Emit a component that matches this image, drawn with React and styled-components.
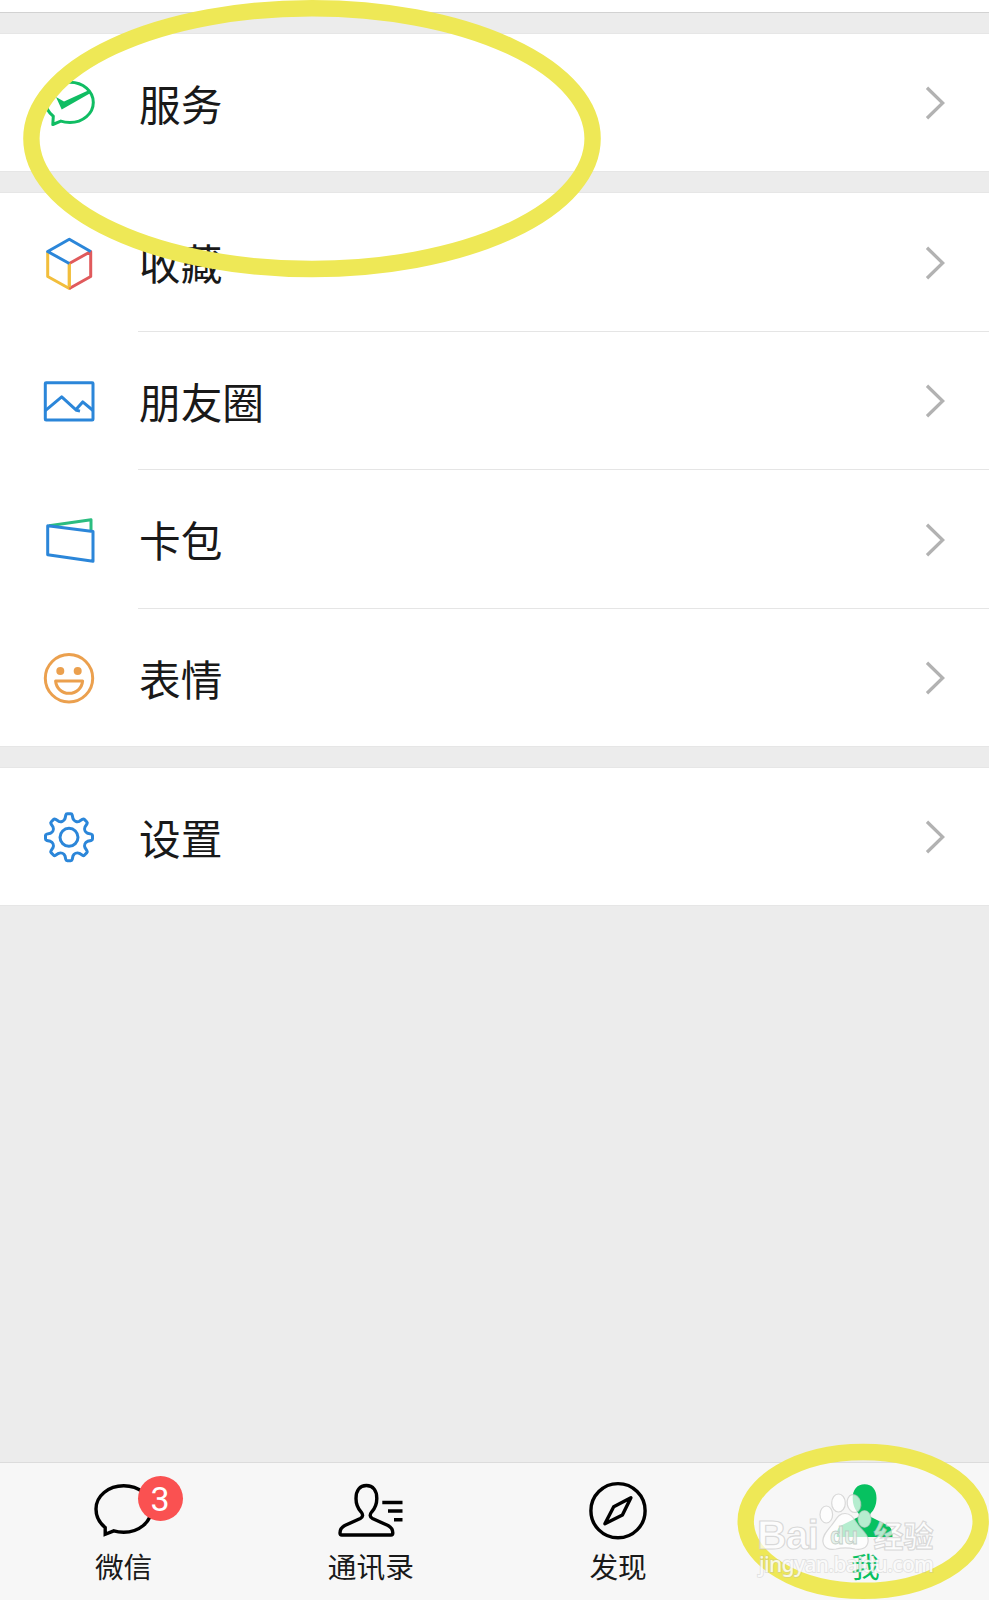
import React from 'react';
import styled, { createGlobalStyle } from 'styled-components';

const GlobalStyle = createGlobalStyle`
  * {
    box-sizing: border-box;
  }
  body {
    margin: 0;
    background-color: #ececec;
    font-family: 'Noto Sans CJK SC', 'Noto Sans', sans-serif;
  }
`;

const Screen = styled.div`
  position: relative;
  display: flex;
  flex-direction: column;
  width: 989px;
  height: 1600px;
  overflow: hidden;
  background-color: #ececec;
`;

const TopCard = styled.div`
  height: 13px;
  background-color: #ffffff;
  border-bottom: 1px solid #d2d2d2;
`;

const Groups = styled.main`
  display: flex;
  flex-direction: column;
  flex: 1;
  gap: 22px;
  padding-top: 21px;
`;

const Group = styled.section`
  background-color: #ffffff;
  box-shadow: 0 0 0 1px #e6e6e6;
`;

const Row = styled.div`
  display: flex;
  align-items: center;
  height: ${(props) => props.$height}px;
  padding-left: 41px;
`;

const RowBody = styled.div`
  display: flex;
  align-items: center;
  justify-content: space-between;
  flex: 1;
  height: 100%;
  margin-left: 41px;
  padding-right: 44px;
  border-bottom: ${(props) => (props.$divider ? '1px solid #e5e5e5' : 'none')};
`;

const RowLabel = styled.span`
  font-size: 41.7px;
  line-height: 60px;
  color: #191919;
  padding-left: 1px;
`;

const RowIcon = styled.svg`
  width: 56px;
  height: 56px;
  fill: none;
  stroke-width: 3;
  stroke-linejoin: round;
`;

const Chevron = styled.svg`
  width: 20px;
  height: 34px;
  margin-top: 1px;
  fill: none;
  stroke: #b2b2b2;
  stroke-width: 3.3;
`;

const TabBar = styled.nav`
  display: grid;
  grid-template-columns: repeat(4, 1fr);
  height: 138px;
  background-color: #f7f7f7;
  border-top: 1px solid #dcdcdc;
`;

const Tab = styled.div`
  display: flex;
  flex-direction: column;
  align-items: center;
  padding-top: 17px;
  color: ${(props) => (props.$active ? '#07c160' : '#191919')};
`;

const TabIconBox = styled.div`
  position: relative;
  width: 72px;
  height: 60px;
`;

const TabIcon = styled.svg`
  display: block;
  width: 72px;
  height: 60px;
  fill: none;
  stroke: #000000;
  stroke-width: 3.4;
`;

const TabLabel = styled.span`
  margin-top: 5px;
  font-size: 28.7px;
  line-height: 42px;
`;

const Badge = styled.span`
  position: absolute;
  top: -4px;
  left: 50px;
  width: 45px;
  height: 45px;
  border-radius: 50%;
  background-color: #fa5151;
  color: #ffffff;
  font-family: Roboto, sans-serif;
  font-size: 34px;
  line-height: 46px;
  text-align: center;
`;

const Overlay = styled.svg`
  position: absolute;
  top: 0;
  left: 0;
  width: 989px;
  height: 1600px;
  pointer-events: none;
`;

const BLUE = '#2b86d9';
const GREEN = '#10bd63';
const YELLOW = '#f2be3c';
const RED = '#e05a5c';
const ORANGE = '#eba04e';

// eight teeth around a 28,28 centre
const gearPath = () => {
  const at = (angle, r, side) => {
    const x = 28 + r * Math.cos(angle) - side * Math.sin(angle);
    const y = 28.3 + r * Math.sin(angle) + side * Math.cos(angle);
    return `${x.toFixed(2)} ${y.toFixed(2)}`;
  };
  let d = '';
  for (let i = 0; i < 8; i++) {
    const a = (i * Math.PI) / 4;
    const next = a + Math.PI / 4;
    d += `${i === 0 ? 'M' : 'L'}${at(a, 18.6, -4)}`;
    d += `L${at(a, 22.2, -3.2)}Q${at(a, 23.5, -2.9)} ${at(a, 23.5, -1.8)}`;
    d += `L${at(a, 23.5, 1.8)}Q${at(a, 23.5, 2.9)} ${at(a, 22.2, 3.2)}`;
    d += `L${at(a, 18.6, 4)}`;
    d += `C${at(a, 16.2, 5)} ${at(next, 16.2, -5)} ${at(next, 18.6, -4)}`;
  }
  return `${d}Z`;
};

const ServiceIcon = () => (
  <RowIcon viewBox="0 0 56 56" stroke={GREEN}>
    <path d="M12.3 41.2L11.8 49.5L19.8 46.1C22.5 47.1 25.6 47.5 29 47.5C42 47.5 52.3 38.5 52.3 27.5C52.3 16.3 42 7.3 29 7.3C16 7.3 5 16.3 5 27.5C5 33 7.8 37.8 12.3 41.2Z" />
    <path d="M15 22L20.7 34.5L49.6 18L47.7 15.2L23 26.5Z" fill={GREEN} stroke="none" />
  </RowIcon>
);

const FavoritesIcon = () => (
  <RowIcon viewBox="0 0 56 56">
    <path d="M6.7 16.5V41.5L28.3 53.5V28.5" stroke={YELLOW} />
    <path d="M28.3 53.5L49.7 41.5V16.5L28.3 28.5" stroke={RED} />
    <path d="M28.3 28.5V52.5" stroke={YELLOW} />
    <path d="M28.3 28.5L6.7 16.5L28.3 4.3L49.7 16.5" stroke={BLUE} />
  </RowIcon>
);

const MomentsIcon = () => (
  <RowIcon viewBox="0 0 56 56" stroke={BLUE}>
    <rect x="4.3" y="9.7" width="47.7" height="37.4" rx="0.8" />
    <path d="M4.3 37.7L20.7 23.9L35.5 37.3L39 38.1M35 36.5L41.7 28.9L52 37.5" />
  </RowIcon>
);

const CardsIcon = () => (
  <RowIcon viewBox="0 0 56 56">
    <path d="M8 13.7L50 7.7V18.5" stroke="#2bbd80" />
    <path d="M6.7 13.8L52 19.5V49.2L6.7 42.8Z" stroke={BLUE} />
  </RowIcon>
);

const StickersIcon = () => (
  <RowIcon viewBox="0 0 56 56" stroke={ORANGE}>
    <circle cx="28" cy="28.2" r="23.7" />
    <circle cx="19.3" cy="21" r="4" fill={ORANGE} stroke="none" />
    <circle cx="36.7" cy="21" r="4" fill={ORANGE} stroke="none" />
    <path d="M14.6 31H41.6C41 38 35.4 43.300 28 43.300C20.800 43.300 15.200 38 14.600 31Z" />
  </RowIcon>
);

const SettingsIcon = () => (
  <RowIcon viewBox="0 0 56 56" stroke={BLUE}>
    <path d={gearPath()} />
    <circle cx="28" cy="28.3" r="9" />
  </RowIcon>
);

const groups = [
  [{ label: '服务', Icon: ServiceIcon, height: 137 }],
  [
    { label: '收藏', Icon: FavoritesIcon, height: 139 },
    { label: '朋友圈', Icon: MomentsIcon, height: 138 },
    { label: '卡包', Icon: CardsIcon, height: 139 },
    { label: '表情', Icon: StickersIcon, height: 137 },
  ],
  [{ label: '设置', Icon: SettingsIcon, height: 137 }],
];

const MenuRow = ({ item, divider }) => (
  <Row $height={item.height}>
    <item.Icon />
    <RowBody $divider={divider}>
      <RowLabel>{item.label}</RowLabel>
      <Chevron viewBox="0 0 20 34">
        <path d="M2 1.8L17.700 17L2 32.200" />
      </Chevron>
    </RowBody>
  </Row>
);

const Marks = () => (
  <Overlay viewBox="0 0 989 1600" fill="none" stroke="#eee856" strokeWidth="16.4">
    <ellipse cx="312" cy="138.6" rx="280.6" ry="130.4" />
    <ellipse cx="863.2" cy="1521.4" rx="117.5" ry="69.4" />
  </Overlay>
);

const Watermark = () => (
  <Overlay viewBox="0 0 989 1600">
    <g fill="#ffffff" fillOpacity="0.7" stroke="#bdbdbd" strokeOpacity="0.55" strokeWidth="1.200">
      <text x="757" y="1548.5" fontFamily="Liberation Sans, sans-serif" fontWeight="700" fontSize="41" textLength="62">Bai</text>
      <ellipse cx="826.300" cy="1514.500" rx="6.300" ry="8.500" />
      <ellipse cx="838.500" cy="1503" rx="6.800" ry="9" />
      <ellipse cx="854" cy="1503.500" rx="6.800" ry="9" transform="rotate(-12 854 1503.5)" />
      <ellipse cx="864.500" cy="1519" rx="6.500" ry="8.500" />
      <path d="M845 1513.500C852 1513.500 854 1519.500 859 1526C864 1532 869 1535.500 868 1542C867 1548.500 861 1550 855 1549C848 1547.500 842 1547.500 836 1549C829 1550.500 824 1548 823 1542C822 1536 827 1531 831 1526C836 1520 838 1513.500 845 1513.500Z" />
      <text x="873.500" y="1546.500" fontFamily="Noto Sans CJK SC, sans-serif" fontWeight="700" fontSize="30">经验</text>
    </g>
    <text
      x="830"
      y="1543.500"
      fontFamily="Liberation Sans, sans-serif"
      fontWeight="700"
      fontSize="23"
      fill="#e4f1e9"
      fillOpacity="0.9"
      stroke="#b9c4bd"
      strokeOpacity="0.8"
      strokeWidth="0.800"
      textLength="28"
    >
      du
    </text>
    <text
      x="759"
      y="1571.500"
      fontFamily="Noto Sans, sans-serif"
      fontWeight="500"
      fontSize="21"
      fill="#ffffff"
      fillOpacity="0.82"
      stroke="#b5b5b5"
      strokeOpacity="0.32"
      strokeWidth="1.800"
      paintOrder="stroke"
      textLength="175"
    >
      jingyan.baidu.com
    </text>
  </Overlay>
);

const App = () => {
  return (
    <>
      <GlobalStyle />
      <Screen>
        <TopCard />
        <Groups>
          {groups.map((items) => (
            <Group key={items[0].label}>
              {items.map((item, i) => (
                <MenuRow key={item.label} item={item} divider={i < items.length - 1} />
              ))}
            </Group>
          ))}
        </Groups>
        <TabBar>
          <Tab>
            <TabIconBox>
              <TabIcon viewBox="0 0 72 60">
                <path d="M17.2 47.5V54.3L25.8 50.9C29 51.9 32 52.3 35.7 52.3C51 52.3 63.4 42 63.4 29C63.4 16 51 5.8 35.7 5.8C20.4 5.8 8 16 8 29C8 36.5 11.5 43 17.2 47.5Z" />
              </TabIcon>
              <Badge>3</Badge>
            </TabIconBox>
            <TabLabel>微信</TabLabel>
          </Tab>
          <Tab>
            <TabIconBox>
              <TabIcon viewBox="0 0 72 60">
                <path d="M31.4 5.5C38 5.5 41.8 10.5 41.8 18.5C41.8 24 39.8 28.5 36.8 31.8C34.6 34.5 34.6 37 37.5 38.5L52.5 45.3C56.5 47.2 57.8 49.3 57.8 53Q57.8 55 56 55H6.8Q5 55 5 53C5 49.3 6.3 47.2 10.3 45.3L25.3 38.5C28.2 37 28.2 34.5 26 31.8C23 28.5 21 24 21 18.5C21 10.5 24.8 5.5 31.4 5.5Z" />
                <path d="M47.3 22.5H67.5M53 31H67.5M59 39.7H67.5" />
              </TabIcon>
            </TabIconBox>
            <TabLabel>通讯录</TabLabel>
          </Tab>
          <Tab>
            <TabIconBox>
              <TabIcon viewBox="0 0 72 60" strokeLinejoin="round">
                <circle cx="36" cy="30.7" r="27.1" />
                <path d="M48.9 17.7L40.4 34.9L22.9 43.7L31.7 26.7Z" />
              </TabIcon>
            </TabIconBox>
            <TabLabel>发现</TabLabel>
          </Tab>
          <Tab $active>
            <TabIconBox>
              <TabIcon viewBox="0 0 72 60">
                <path
                  d="M35.6 4.3C43 4.3 47.5 9.5 47.5 18C47.5 25 45 30 42 33C40.5 35 41 36.5 43 37.5L57 44.5C61.5 46.7 63.5 49 63.5 57H7.7C7.7 49 9.7 46.7 14.2 44.5L28.2 37.5C30.2 36.5 30.7 35 29.2 33C26.2 30 23.7 25 23.7 18C23.7 9.5 28.2 4.3 35.6 4.3Z"
                  fill="#07c160"
                  stroke="none"
                />
              </TabIcon>
            </TabIconBox>
            <TabLabel>我</TabLabel>
          </Tab>
        </TabBar>
        <Marks />
        <Watermark />
      </Screen>
    </>
  );
};

export default App;
